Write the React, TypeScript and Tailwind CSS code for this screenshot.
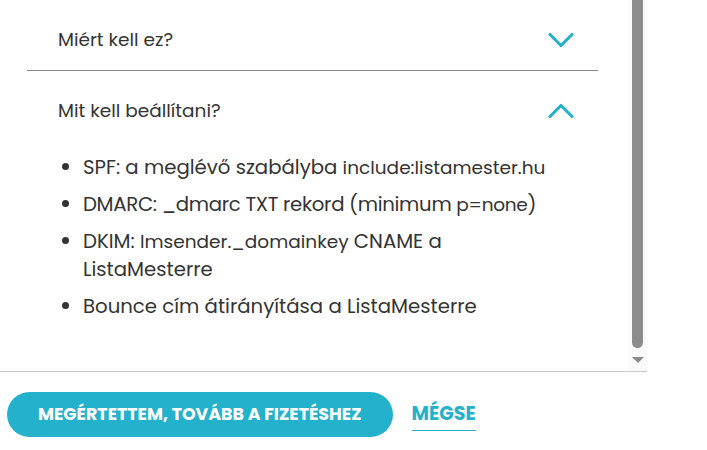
import { ChevronDown, ChevronUp } from "lucide-react";

const FONT = "font-['Poppins','Inter','Noto_Sans',sans-serif]";

function Code({ children }: { children: string }) {
  return <span className="text-[18.5px] leading-none">{children}</span>;
}

function Header({ title, open }: { title: string; open?: boolean }) {
  return (
    <div className="flex h-[70px] items-center justify-between pl-[31px] pr-[15px] pt-[10px]">
      <span className="text-[18.5px] text-[#333333]">{title}</span>
      {open ? (
        <ChevronUp className="h-[44px] w-[44px] text-[#24b1cc]" strokeWidth={1.7} />
      ) : (
        <ChevronDown className="h-[44px] w-[44px] text-[#24b1cc]" strokeWidth={1.7} />
      )}
    </div>
  );
}

export default function App() {
  return (
    <div className={`${FONT} h-[450px] w-[707px] overflow-hidden bg-white`}>
      <div className="flex h-[372px] w-[647px] border-b border-[#cdc8cc]">
        <div className="flex-1 overflow-hidden">
          <div className="pl-[27px] pr-[30px]">
            <div className="border-b border-[#8e8790]">
              <Header title="Miért kell ez?" />
            </div>
            <Header title="Mit kell beállítani?" open />
            <ul className="mt-[12px] list-disc pl-[56px] pr-[40px] text-[19.7px] leading-[28px] text-[#333333] [&>li]:mb-[9px]">
              <li>
                SPF: a meglévő szabályba <Code>include:listamester.hu</Code>
              </li>
              <li className="tracking-[-0.3px]">
                DMARC: _dmarc TXT rekord (minimum <Code>p=none</Code>)
              </li>
              <li>
                <span>DKIM:</span> <Code>lmsender._domainkey</Code> <span>CNAME a</span>{" "}
                <span>ListaMesterre</span>
              </li>
              <li>Bounce cím átirányítása a ListaMesterre</li>
            </ul>
          </div>
        </div>
        <div className="flex w-[19px] flex-col items-center bg-[#fafafa]">
          <div className="h-[348px] w-[11px] rounded-b-full bg-[#8c8c8c]" />
          <div className="mt-[9px] h-0 w-0 border-x-[6px] border-t-[6px] border-x-transparent border-t-[#8c8c8c]" />
        </div>
      </div>
      <div className="flex items-center gap-[19px] pl-[7px] pt-[20px]">
        <button className="h-[45px] rounded-full bg-[#24b1cc] px-[31px] text-[17.4px] font-bold uppercase text-white">
          Megértettem, tovább a fizetéshez
        </button>
        <button className="mt-[4px] border-b-[1.5px] border-[#24b1cc] pb-[4px] text-[19px] font-bold uppercase leading-[24px] text-[#24b1cc]">
          Mégse
        </button>
      </div>
    </div>
  );
}
